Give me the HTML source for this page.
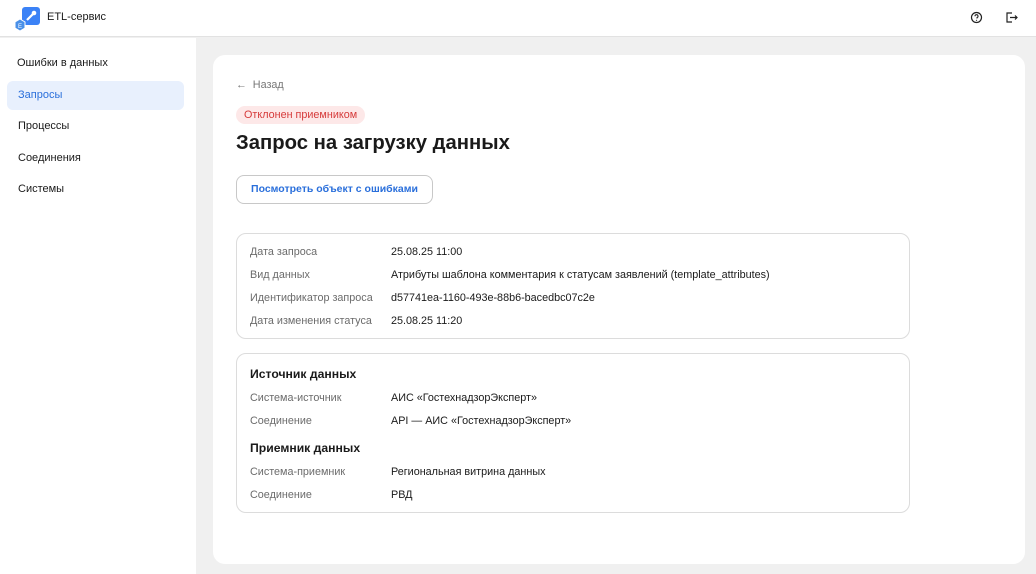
<!DOCTYPE html>
<html><head><meta charset="utf-8"><style>
*{box-sizing:border-box;margin:0;padding:0}
body{width:1036px;height:574px;overflow:hidden;font-family:"Liberation Sans","Noto Sans CJK SC",sans-serif;background:#f0f0f0;color:#1a1a1a;position:relative}
.top{position:absolute;left:0;top:0;width:1036px;height:37px;background:#fff;border-bottom:1px solid #e2e2e2}
.side{position:absolute;left:0;top:38px;width:196px;height:536px;background:#fff}
.side div{position:absolute;left:7px;width:177px;height:29px;font-size:11px;line-height:29px;padding-left:11px;color:#1a1a1a}
.main{position:absolute;left:213px;top:55px;width:812px;height:509px;background:#fff;border-radius:12px}
.card{position:absolute;left:23px;width:674px;border:1px solid #dcdcdc;border-radius:10px}
.r{position:absolute;font-size:10.8px;white-space:nowrap}
.l{left:13px;color:#6b6b6b}.v{left:154px;color:#1a1a1a}
h3{position:absolute;left:13px;font-size:12.2px;font-weight:bold}
</style></head><body>
<div class="top">
<svg style="position:absolute;left:12px;top:6px" width="30" height="26" viewBox="0 0 30 26"><rect x="10" y="1" width="18" height="18" rx="3" fill="#3b82f6"/><path d="M15 14 L22 7" stroke="#fff" stroke-width="2.2"/><circle cx="22" cy="7" r="2.3" fill="#fff"/><polygon points="8,13 13,16 13,22 8,25 3,22 3,16" fill="#4a90e8" stroke="#fff" stroke-width="1"/><text x="6" y="22" font-size="6" fill="#fff" font-family="Liberation Sans">E</text></svg>
<div style="position:absolute;left:47px;top:11px;font-size:11px">ETL-сервис</div>
<svg style="position:absolute;left:970px;top:11px" width="13" height="13" viewBox="0 0 13 13"><circle cx="6.5" cy="6.5" r="5" fill="none" stroke="#222" stroke-width="1.2"/><path d="M5 5.2a1.5 1.5 0 1 1 2 1.4v.9" fill="none" stroke="#222" stroke-width="1.1"/><circle cx="6.5" cy="9.3" r=".6" fill="#222"/></svg>
<svg style="position:absolute;left:1005px;top:11px" width="13" height="13" viewBox="0 0 13 13"><path d="M7 2H2v9h5" fill="none" stroke="#222" stroke-width="1.2"/><path d="M5 6.5h7M10 4.5l2 2-2 2" fill="none" stroke="#222" stroke-width="1.2"/></svg>
</div>
<div class="side">
<div style="top:11px;left:6px">Ошибки в данных</div>
<div style="top:43px;background:#e8f0fd;border-radius:6px;color:#2a6fdb">Запросы</div>
<div style="top:74px">Процессы</div>
<div style="top:106px">Соединения</div>
<div style="top:137px">Системы</div>
</div>
<div class="main">
<div style="position:absolute;left:23px;top:24px;font-size:10.8px;color:#777">← &nbsp;Назад</div>
<div style="position:absolute;left:23px;top:51px;height:18px;padding:0 8px;background:#fde8e8;color:#d63a3a;border-radius:9px;font-size:10.8px;line-height:18px">Отклонен приемником</div>
<div style="position:absolute;left:23px;top:77px;font-size:20.3px;font-weight:bold">Запрос на загрузку данных</div>
<div style="position:absolute;left:23px;top:120px;width:197px;height:29px;border:1px solid #c8c8c8;border-radius:8px;color:#2a6fdb;font-size:10.5px;font-weight:bold;text-align:center;line-height:27px">Посмотреть объект с ошибками</div>
<div class="card" style="top:178px;height:106px">
<div class="r l" style="top:12px">Дата запроса</div><div class="r v" style="top:12px">25.08.25 11:00</div>
<div class="r l" style="top:35px">Вид данных</div><div class="r v" style="top:35px">Атрибуты шаблона комментария к статусам заявлений (template_attributes)</div>
<div class="r l" style="top:58px">Идентификатор запроса</div><div class="r v" style="top:58px">d57741ea-1160-493e-88b6-bacedbc07c2e</div>
<div class="r l" style="top:81px">Дата изменения статуса</div><div class="r v" style="top:81px">25.08.25 11:20</div>
</div>
<div class="card" style="top:298px;height:160px">
<h3 style="top:13px">Источник данных</h3>
<div class="r l" style="top:38px">Система-источник</div><div class="r v" style="top:38px">АИС «ГостехнадзорЭксперт»</div>
<div class="r l" style="top:61px">Соединение</div><div class="r v" style="top:61px">API — АИС «ГостехнадзорЭксперт»</div>
<h3 style="top:87px">Приемник данных</h3>
<div class="r l" style="top:112px">Система-приемник</div><div class="r v" style="top:112px">Региональная витрина данных</div>
<div class="r l" style="top:135px">Соединение</div><div class="r v" style="top:135px">РВД</div>
</div>
</div>
</body></html>
